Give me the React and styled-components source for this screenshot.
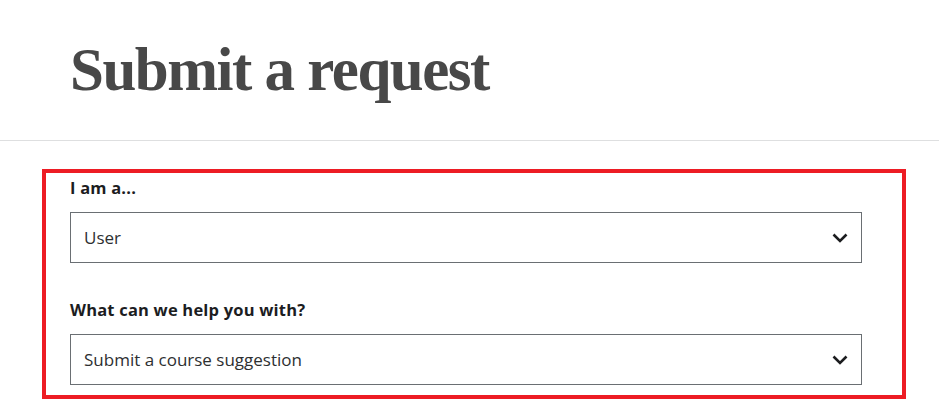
import React from "react";
import styled, { createGlobalStyle } from "styled-components";

const Global = createGlobalStyle`
  body {
    margin: 0;
    background: #ffffff;
    font-family: "Open Sans", "Liberation Sans", sans-serif;
  }
`;

const Page = styled.div`
  width: 939px;
  height: 410px;
  overflow: hidden;
`;

const Header = styled.header`
  height: 140px;
  border-bottom: 1px solid #dedfe0;
  display: flex;
  align-items: center;
  padding-left: 70px;
`;

const Title = styled.h1`
  margin: 0;
  font-family: "Liberation Serif", "DejaVu Serif", serif;
  font-weight: 700;
  font-size: 61px;
  letter-spacing: -1.5px;
  color: #484848;
`;

const Form = styled.form`
  margin: 28px 0 0 42px;
  width: 864px;
  box-sizing: border-box;
  border: 4px solid #ed1c24;
  padding: 4px 0 10px 24px;
  display: flex;
  flex-direction: column;
  gap: 36px;
`;

const Field = styled.div`
  display: flex;
  flex-direction: column;
  gap: 13px;
`;

const Label = styled.label`
  font-size: 16.5px;
  font-weight: 700;
  letter-spacing: 0.2px;
  color: #1c1d1f;
  line-height: 22px;
`;

const Select = styled.div`
  width: 792px;
  height: 51px;
  box-sizing: border-box;
  border: 1px solid #6a6f73;
  display: flex;
  align-items: center;
  justify-content: space-between;
  padding: 0 13px;
  font-size: 17px;
  color: #2d2f31;
`;

const Chevron = () => (
  <svg width="16" height="10" viewBox="0 0 16 10" fill="none">
    <path d="M1.5 1.5 L8 8 L14.5 1.5" stroke="#1c1d1f" strokeWidth="2.6" />
  </svg>
);

export default function App() {
  return (
    <Page>
      <Global />
      <Header>
        <Title>Submit a request</Title>
      </Header>
      <Form>
        <Field>
          <Label>I am a...</Label>
          <Select>
            <span>User</span>
            <Chevron />
          </Select>
        </Field>
        <Field>
          <Label>What can we help you with?</Label>
          <Select>
            <span>Submit a course suggestion</span>
            <Chevron />
          </Select>
        </Field>
      </Form>
    </Page>
  );
}
